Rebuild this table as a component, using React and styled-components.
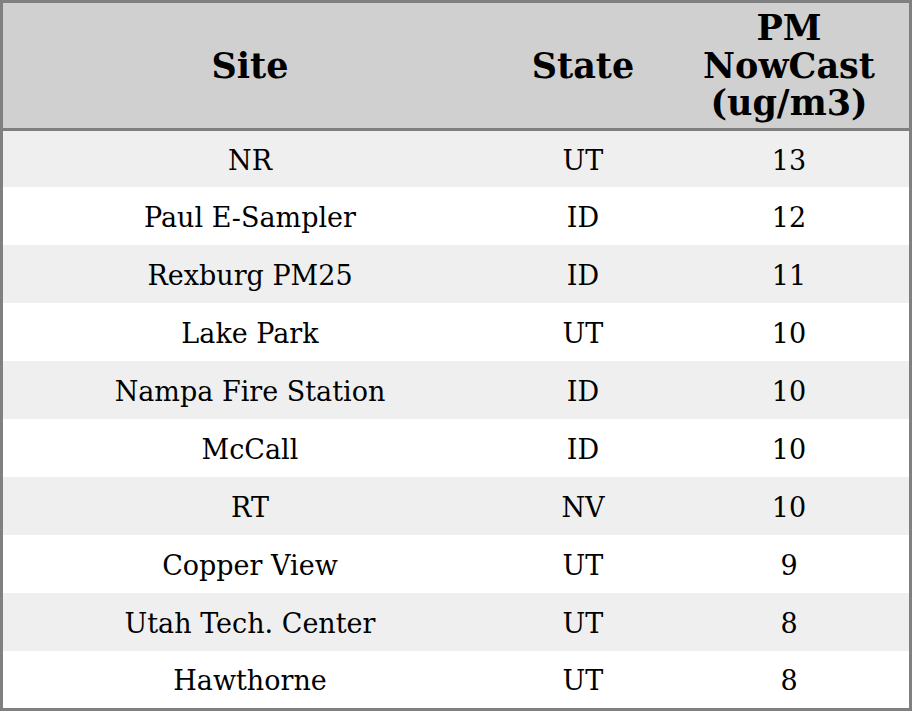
import styled, { createGlobalStyle } from "styled-components";

const Global = createGlobalStyle`
    html, body {
        margin: 0;
        padding: 0;
        background: #ffffff;
    }
`;

const Table = styled.table`
    width: 912px;
    box-sizing: border-box;
    table-layout: fixed;
    border: 3px solid #808080;
    border-collapse: separate;
    border-spacing: 0;
    font-family: "DejaVu Serif", serif;
    color: #000000;
`;

const Col = styled.col`
    width: ${(p) => p.$w}px;
`;

const HeadCell = styled.th`
    box-sizing: content-box;
    height: 125px;
    padding: 0;
    background-color: #d0d0d0;
    border-bottom: 3px solid #808080;
    font-size: 35px;
    font-weight: 700;
    line-height: 37.5px;
    text-align: center;
`;

const Row = styled.tr`
    height: 58px;
    background-color: ${(p) => (p.$odd ? "#efefef" : "#ffffff")};
    &:first-child {
        height: 56px;
    }
    &:last-child {
        height: 57px;
    }
`;

const Cell = styled.td`
    padding: 2px 0 0;
    font-size: 27px;
    text-align: center;
`;

const rows = [
    ["NR", "UT", 13],
    ["Paul E-Sampler", "ID", 12],
    ["Rexburg PM25", "ID", 11],
    ["Lake Park", "UT", 10],
    ["Nampa Fire Station", "ID", 10],
    ["McCall", "ID", 10],
    ["RT", "NV", 10],
    ["Copper View", "UT", 9],
    ["Utah Tech. Center", "UT", 8],
    ["Hawthorne", "UT", 8],
];

export default function App() {
    return (
        <>
            <Global />
            <Table>
                <colgroup>
                    <Col $w={494} />
                    <Col $w={172} />
                    <Col $w={240} />
                </colgroup>
                <thead>
                    <tr>
                        <HeadCell>Site</HeadCell>
                        <HeadCell>State</HeadCell>
                        <HeadCell>
                            PM
                            <br />
                            NowCast
                            <br />
                            (ug/m3)
                        </HeadCell>
                    </tr>
                </thead>
                <tbody>
                    {rows.map(([site, state, pm], i) => (
                        <Row key={site} $odd={i % 2 === 0}>
                            <Cell>{site}</Cell>
                            <Cell>{state}</Cell>
                            <Cell>{pm}</Cell>
                        </Row>
                    ))}
                </tbody>
            </Table>
        </>
    );
}
